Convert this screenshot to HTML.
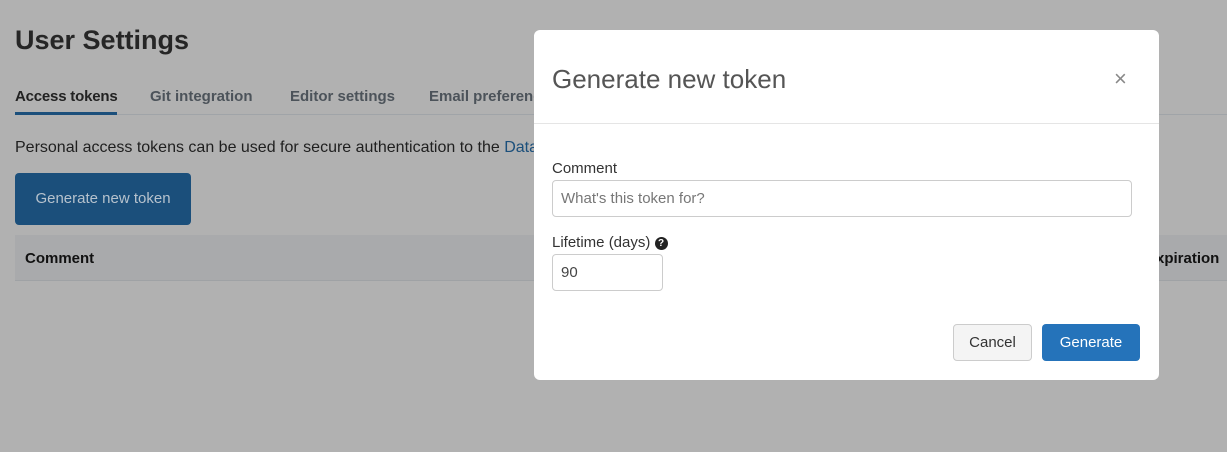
<!DOCTYPE html>
<html><head><style>
body{margin:0;width:1227px;height:452px;background:#b1b1b1;font-family:"Liberation Sans",sans-serif;position:relative;overflow:hidden;color:#1f1f1f}
.a{position:absolute;white-space:nowrap}
</style></head><body>
<div class="a" style="left:15px;top:25px;font-size:27px;font-weight:bold;color:#262626">User Settings</div>
<div class="a" style="left:15px;top:88px;font-size:15px;font-weight:bold;color:#222;letter-spacing:-0.2px">Access tokens</div>
<div class="a" style="left:150px;top:88px;font-size:15px;font-weight:bold;color:#4c535a">Git integration</div>
<div class="a" style="left:290px;top:88px;font-size:15px;font-weight:bold;color:#4c535a">Editor settings</div>
<div class="a" style="left:429px;top:88px;font-size:15px;font-weight:bold;color:#4c535a">Email preferences</div>
<div class="a" style="left:15px;top:114px;width:1212px;height:1px;background:#a0a4a8"></div>
<div class="a" style="left:15px;top:112px;width:102px;height:3px;background:#1b4f7b"></div>
<div class="a" style="left:15px;top:139px;font-size:16px;color:#1f1f1f">Personal access tokens can be used for secure authentication to the <span style="color:#1b4f7b">Data</span></div>
<div class="a" style="left:15px;top:173px;width:176px;height:52px;background:#1b4f7b;border-radius:4px;color:#b6c2cd;font-size:15px;line-height:52px;text-align:center">Generate new token</div>
<div class="a" style="left:15px;top:235px;width:1212px;height:45px;background:#a9aaac;border-bottom:1px solid #9fa2a5"></div>
<div class="a" style="left:25px;top:250px;font-size:15px;font-weight:bold;color:#111">Comment</div>
<div class="a" style="left:1146px;top:250px;font-size:15px;font-weight:bold;color:#111">Expiration</div>
<div class="a" style="left:534px;top:30px;width:625px;height:350px;background:#fff;border-radius:6px">
 <div class="a" style="left:18px;top:34px;font-size:26px;color:#555">Generate new token</div>
 <div class="a" style="left:580px;top:36px;font-size:22px;color:#888">×</div>
 <div class="a" style="left:0;top:93px;width:625px;height:1px;background:#e5e5e5"></div>
 <div class="a" style="left:18px;top:130px;font-size:15px;color:#333">Comment</div>
 <div class="a" style="left:18px;top:150px;border:1px solid #ccc;border-radius:4px;font-size:15px;color:#777;line-height:35px;padding-left:8px;box-sizing:border-box;width:580px;height:37px">What's this token for?</div>
 <div class="a" style="left:18px;top:204px;font-size:15px;color:#333">Lifetime (days) <span style="display:inline-block;width:13px;height:13px;border-radius:50%;background:#222;color:#fff;font-size:10px;font-weight:bold;text-align:center;line-height:13px;vertical-align:1px">?</span></div>
 <div class="a" style="left:18px;top:224px;width:111px;height:37px;box-sizing:border-box;border:1px solid #ccc;border-radius:4px;font-size:15px;color:#444;line-height:35px;padding-left:8px">90</div>
 <div class="a" style="left:419px;top:294px;width:79px;height:37px;box-sizing:border-box;border:1px solid #ccc;border-radius:4px;background:#f4f4f4;font-size:15px;color:#333;line-height:35px;text-align:center">Cancel</div>
 <div class="a" style="left:508px;top:294px;width:98px;height:37px;border-radius:4px;background:#2573ba;font-size:15px;color:#fff;line-height:37px;text-align:center">Generate</div>
</div>
</body></html>
